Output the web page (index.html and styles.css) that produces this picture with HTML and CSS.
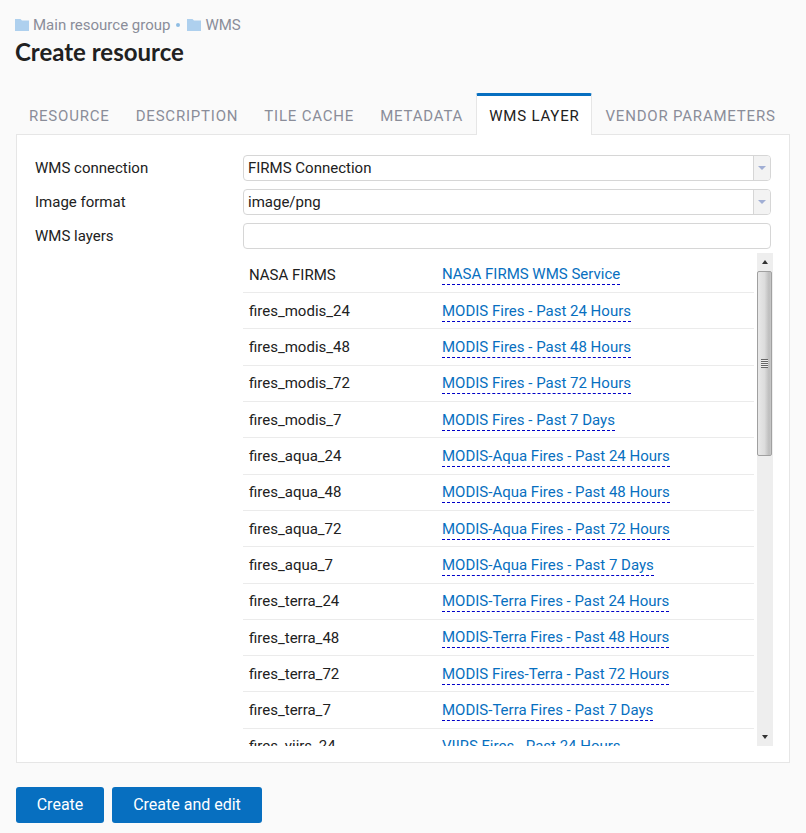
FILE: index.html
```html
<!DOCTYPE html>
<html lang="en">
<head>
<meta charset="utf-8">
<title>Create resource</title>
<link rel="stylesheet" href="styles.css">
</head>
<body>
<header class="head">
  <nav class="crumbs">
    <svg class="folder" viewBox="0 0 14 12"><path d="M0 0H5.5L7 1.5H14V12H0Z"/></svg>
    <span>Main resource group</span>
    <span class="dot"></span>
    <svg class="folder" viewBox="0 0 14 12"><path d="M0 0H5.5L7 1.5H14V12H0Z"/></svg>
    <span>WMS</span>
  </nav>
  <h1 class="title">Create resource</h1>
</header>
<div class="tabs">
  <div class="tab">RESOURCE</div>
  <div class="tab">DESCRIPTION</div>
  <div class="tab">TILE CACHE</div>
  <div class="tab">METADATA</div>
  <div class="tab active">WMS LAYER</div>
  <div class="tab">VENDOR PARAMETERS</div>
</div>
<main class="panel">
  <div class="field">
    <label class="lbl">WMS connection</label>
    <div class="select"><span class="val">FIRMS Connection</span><span class="arrow"><i></i></span></div>
  </div>
  <div class="field">
    <label class="lbl">Image format</label>
    <div class="select"><span class="val">image/png</span><span class="arrow"><i></i></span></div>
  </div>
  <div class="field field-last">
    <label class="lbl">WMS layers</label>
    <div class="select"></div>
  </div>
  <div class="listwrap">
    <div class="list">
      <div class="row"><span class="id">NASA FIRMS</span><span class="name"><a>NASA FIRMS WMS Service</a></span></div>
      <div class="row"><span class="id">fires_modis_24</span><span class="name"><a>MODIS Fires - Past 24 Hours</a></span></div>
      <div class="row"><span class="id">fires_modis_48</span><span class="name"><a>MODIS Fires - Past 48 Hours</a></span></div>
      <div class="row"><span class="id">fires_modis_72</span><span class="name"><a>MODIS Fires - Past 72 Hours</a></span></div>
      <div class="row"><span class="id">fires_modis_7</span><span class="name"><a>MODIS Fires - Past 7 Days</a></span></div>
      <div class="row"><span class="id">fires_aqua_24</span><span class="name"><a>MODIS-Aqua Fires - Past 24 Hours</a></span></div>
      <div class="row"><span class="id">fires_aqua_48</span><span class="name"><a>MODIS-Aqua Fires - Past 48 Hours</a></span></div>
      <div class="row"><span class="id">fires_aqua_72</span><span class="name"><a>MODIS-Aqua Fires - Past 72 Hours</a></span></div>
      <div class="row"><span class="id">fires_aqua_7</span><span class="name"><a>MODIS-Aqua Fires - Past 7 Days</a></span></div>
      <div class="row"><span class="id">fires_terra_24</span><span class="name"><a>MODIS-Terra Fires - Past 24 Hours</a></span></div>
      <div class="row"><span class="id">fires_terra_48</span><span class="name"><a>MODIS-Terra Fires - Past 48 Hours</a></span></div>
      <div class="row"><span class="id">fires_terra_72</span><span class="name"><a>MODIS Fires-Terra - Past 72 Hours</a></span></div>
      <div class="row"><span class="id">fires_terra_7</span><span class="name"><a>MODIS-Terra Fires - Past 7 Days</a></span></div>
      <div class="row"><span class="id">fires_viirs_24</span><span class="name"><a>VIIRS Fires - Past 24 Hours</a></span></div>
    </div>
    <div class="scrollbar">
      <div class="sb-btn"><i class="up"></i></div>
      <div class="thumb"><div class="grip"></div></div>
      <div class="track"></div>
      <div class="sb-btn"><i class="down"></i></div>
    </div>
  </div>
</main>
<footer class="actions">
  <button class="btn btn-create">Create</button>
  <button class="btn btn-edit">Create and edit</button>
</footer>
</body>
</html>
```
FILE: styles.css
```css
* { box-sizing: border-box; }
html, body { height: 100%; }
body {
  margin: 0;
  height: 833px;
  overflow: hidden;
  background: #fafafa;
  color: #212121;
  font: 15px/20px Roboto, sans-serif;
  padding: 15px 16px 0;
}
.head { margin-left: -1px; }
.crumbs {
  display: flex;
  align-items: center;
  height: 20px;
  color: #8a8d99;
  font-size: 15px;
}
.folder { width: 14px; height: 12px; fill: #aed0ee; margin-right: 4px; }
.dot { width: 4px; height: 4px; border-radius: 50%; background: #8fbde3; margin: 0 7px 0 6px; }
.title {
  margin: 2px 0 0;
  font: 700 24px/30px Lato, sans-serif;
  color: #212121;
}
.tabs { display: flex; margin-top: 26px; height: 41px; }
.tab {
  padding: 0 13px;
  color: #8a8d99;
  font-size: 15px;
  letter-spacing: 0.8px;
  line-height: 46px;
  height: 41px;
}
.tab.active {
  background: #fff;
  color: #212121;
  border: 1px solid #e6e6e6;
  border-top: 3px solid #076fc0;
  border-bottom: 0;
  border-radius: 2px 2px 0 0;
  line-height: 40px;
  padding: 0 11.5px 0 12px;
  position: relative;
  z-index: 1;
  margin-right: 0.5px;
  margin-bottom: -1px;
  height: 42px;
}
.panel {
  width: 774px;
  height: 629px;
  background: #fff;
  border: 1px solid #e6e6e6;
  padding: 20px 18px 0;
  overflow: hidden;
}
.field { display: flex; height: 26px; margin-bottom: 8px; }
.field-last { margin-bottom: 4px; }
.lbl { width: 208px; line-height: 26px; }
.select {
  width: 528px;
  height: 26px;
  display: flex;
  border: 1px solid #d6d6d6;
  border-radius: 4px;
  background: #fff;
}
.val { flex: 1; padding-left: 4px; line-height: 24px; }
.arrow {
  width: 17px;
  border-left: 1px solid #d6d6d6;
  background: #f3f3f3;
  border-radius: 0 3px 3px 0;
  display: flex;
  align-items: center;
  justify-content: center;
}
.arrow i {
  width: 0; height: 0;
  border-left: 4px solid transparent;
  border-right: 4px solid transparent;
  border-top: 4px solid #a0aed4;
}
.listwrap {
  display: flex;
  margin: 0 0 0 208px;
  height: 493px;
  width: 530px;
}
.list { width: 511px; overflow: hidden; margin-right: 3px; padding-top: 3.9px; }
.row {
  display: flex;
  height: 36.3px;
  align-items: center;
  padding-left: 6px;
  border-bottom: 1px solid #ebebeb;
}
.id { width: 193px; }
.name { padding-top: 0.8px; }
.name a {
  color: #076fc0;
  border-bottom: 1px dashed #0000c8;
  padding-bottom: 1px;
  display: inline-block;
  line-height: 18px;
}
.scrollbar {
  width: 16px;
  display: flex;
  flex-direction: column;
  background: #eeeeee;
}
.sb-btn { height: 18px; display: flex; align-items: center; justify-content: center; }
.up, .down { width: 0; height: 0; border-left: 3.5px solid transparent; border-right: 3.5px solid transparent; }
.up { border-bottom: 4px solid #333; }
.down { border-top: 4px solid #333; }
.thumb {
  height: 185px;
  width: 15px;
  border: 1px solid #a0a0a0;
  border-radius: 2px;
  background: linear-gradient(90deg, #e8e8e8 0%, #dcdcdc 50%, #bdbdbd 85%, #c8c8c8 100%);
  display: flex;
  align-items: center;
  justify-content: center;
}
.grip {
  width: 7px;
  height: 9px;
  background: repeating-linear-gradient(180deg, #666 0 1px, #eee 1px 2px);
}
.track { flex: 1; }
.actions { display: flex; gap: 8px; margin-top: 24px; }
.btn {
  height: 36px;
  padding: 0 0 2px;
  border: 0;
  border-radius: 3px;
  background: #076fc0;
  color: #fff;
  font: 16px Roboto, sans-serif;
}
.btn-create { width: 88px; }
.btn-edit { width: 150px; }
```
